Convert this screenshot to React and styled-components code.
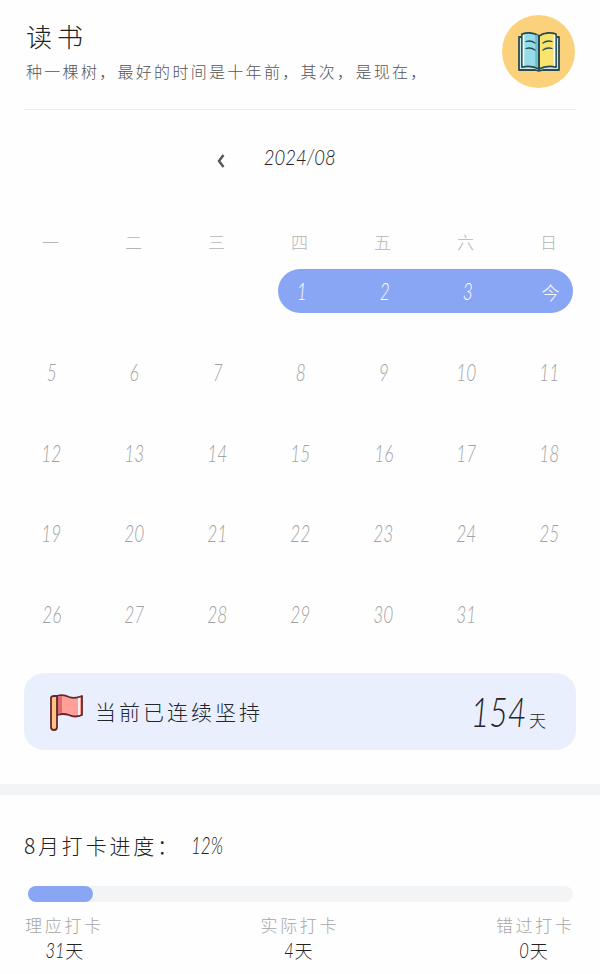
import React from 'react';
import styled, { createGlobalStyle } from 'styled-components';

const GlobalStyle = createGlobalStyle`
  * { box-sizing: border-box; }
  body {
    margin: 0;
    background: #fefefe;
    color: #222;
    font-family: 'Noto Sans CJK SC', sans-serif;
    font-weight: 300;
  }
`;

const Page = styled.main`
  width: 600px;
  height: 974px;
  overflow: hidden;
  display: flex;
  flex-direction: column;
`;

const Header = styled.header`
  height: 110px;
  margin: 0 24px;
  padding-top: 15px;
  border-bottom: 1px solid #ebebeb;
  display: flex;
  justify-content: space-between;
  align-items: flex-start;
`;

const Title = styled.h1`
  margin: 2px 0 0 2px;
  font-size: 26px;
  font-weight: 300;
  line-height: 38px;
  letter-spacing: 5px;
`;

const Subtitle = styled.p`
  margin: 4px 0 0 2px;
  font-size: 16px;
  line-height: 24px;
  letter-spacing: 2.3px;
  white-space: nowrap;
  color: #555;
`;

const Badge = styled.div`
  width: 73px;
  height: 73px;
  margin-right: 1px;
  border-radius: 50%;
  background: #fbd27b;
  display: flex;
  align-items: center;
  justify-content: center;
`;

const Digits = styled.span`
  display: inline-block;
  font-family: Lato, 'Noto Sans CJK SC', sans-serif;
  font-style: italic;
  font-weight: 300;
  font-size: ${(p) => p.$size || 23}px;
  line-height: 1;
  letter-spacing: 0;
  transform: scaleX(${(p) => p.$squeeze || 0.75});
  transform-origin: ${(p) => p.$origin || 'center'};
`;

const MonthBar = styled.div`
  height: 93px;
  display: grid;
  grid-template-columns: 240px 120px 240px;
  align-items: center;
  justify-items: center;
`;

const PrevButton = styled.button`
  width: 20px;
  height: 24px;
  margin: 8px 9px 0 0;
  padding: 0;
  border: 0;
  background: none;
  justify-self: end;
  display: flex;
  align-items: center;
  justify-content: center;
`;

const Week = styled.div`
  height: ${(p) => p.$height}px;
  padding-left: ${(p) => p.$inset}px;
  display: grid;
  grid-template-columns: repeat(7, 83px);
  grid-template-rows: 100%;
  align-items: center;
  justify-items: center;
`;

const WeekdayRow = styled(Week)`
  margin-top: 16px;
`;

const Weeks = styled.div`
  margin-top: 16px;
`;

const Weekday = styled.span`
  grid-row: 1;
  font-size: 17px;
  line-height: 24px;
  color: #b5b5b5;
`;

const Day = styled.span`
  grid-row: 1;
  grid-column: ${(p) => p.$col};
  z-index: 1;
  padding-top: ${(p) => (p.$active ? 2 : 0)}px;
  font-size: 18px;
  line-height: 24px;
  color: ${(p) => (p.$active ? '#fff' : '#a3a3a3')};
`;

const Streak = styled.div`
  grid-row: 1;
  grid-column: 4 / 8;
  justify-self: start;
  width: 295px;
  height: 44px;
  margin-left: 18px;
  border-radius: 22px;
  background: #88a6f3;
`;

const StreakCard = styled.section`
  height: 77px;
  flex: none;
  margin: 18px 24px 0;
  padding: 0 30px 0 23px;
  border-radius: 20px;
  background: #e9effc;
  display: flex;
  align-items: center;
`;

const StreakLabel = styled.span`
  flex: 1;
  margin: -2px 0 0 11px;
  font-size: 21px;
  letter-spacing: 3px;
  color: #25262b;
`;

const StreakCount = styled.div`
  display: flex;
  align-items: baseline;
  gap: 3px;
  font-size: 17px;
  color: #25262b;
`;

const Divider = styled.div`
  height: 11px;
  flex: none;
  margin-top: 34px;
  background: #f3f4f6;
`;

const Progress = styled.section`
  padding: 34px 27px 0 28px;
`;

const ProgressTitle = styled.h2`
  height: 32px;
  margin: 0 0 0 -4px;
  display: flex;
  align-items: center;
  font-size: 21px;
  font-weight: 300;
  letter-spacing: 2.8px;
`;

const Percent = styled.span`
  margin-left: 10px;
  letter-spacing: 0;
`;

const Track = styled.div`
  height: 16px;
  margin-top: 25px;
  border-radius: 8px;
  background: #f3f4f6;
`;

const Fill = styled.div`
  width: ${(p) => p.$percent}%;
  height: 100%;
  border-radius: 8px;
  background: #88a6f3;
`;

const Stats = styled.div`
  margin: 10px 1px 0 -3px;
  display: flex;
  justify-content: space-between;
`;

const Stat = styled.div`
  display: flex;
  flex-direction: column;
  align-items: center;
`;

const StatLabel = styled.span`
  font-size: 17px;
  line-height: 26px;
  letter-spacing: 2.7px;
  margin-right: -2.7px;
  color: #a6a6a6;
`;

const StatValue = styled.span`
  display: flex;
  align-items: center;
  gap: 1px;
  margin-right: 4px;
  font-size: 18px;
  line-height: 24px;
`;

const BookIcon = () => (
  <svg width="42" height="40" viewBox="0 0 42 40" fill="none" stroke="#294b50" strokeWidth="1.8" strokeLinejoin="round" strokeLinecap="round">
    <path d="M4 5H1V38H17Q21 39.5 25 38H41V5H38Z" fill="#cfe9e5" />
    <path d="M4 2Q14-1 21 4V37Q14 33 4 35Z" fill="#95dce8" />
    <path d="M21 4Q28-1 38 2V35Q28 33 21 37Z" fill="#fae36f" />
    <path d="M5.5 3.5V33.5M36.5 3.5V33.5" stroke="#f4ffff" strokeWidth="1.6" />
    <path d="M18.5 4V34" stroke="#6cbccb" strokeWidth="2.5" />
    <path d="M21 4V37" strokeWidth="2" />
    <path d="M8 9.5Q13 8 17 11M8 16.5Q13 15 17 18M25 11Q29 8 34 9.5M25 18Q29 15 34 16.5" strokeWidth="1.3" />
  </svg>
);

const FlagIcon = () => (
  <svg width="37" height="38" viewBox="0 0 37 38" stroke="#63272f" strokeWidth="1.8" strokeLinejoin="round">
    <path d="M10 3Q16 1 22 4Q28 6 35 3V22Q28 25 22 22Q16 20 10 22Z" fill="#ff9f98" />
    <path d="M11 3.5L15 3V20L11 21Z" fill="#df6d70" stroke="none" />
    <path d="M31 5L33 4.7V22L31 22Z" fill="#fff0ef" stroke="none" />
    <path d="M4 5Q4 3 7 3H10V34Q10 37 7 37Q4 37 4 34Z" fill="#ffc580" />
  </svg>
);

const weekdays = ['一', '二', '三', '四', '五', '六', '日'];
const weeks = [5, 12, 19, 26];
const stats = [
  ['理应打卡', 31],
  ['实际打卡', 4],
  ['错过打卡', 0],
];

export default function App() {
  return (
    <>
      <GlobalStyle />
      <Page>
        <Header>
          <div>
            <Title>读书</Title>
            <Subtitle>种一棵树，最好的时间是十年前，其次，是现在，</Subtitle>
          </div>
          <Badge><BookIcon /></Badge>
        </Header>
        <MonthBar>
          <PrevButton aria-label="上个月">
            <svg width="8" height="14" viewBox="0 0 8 14" fill="none" stroke="#555" strokeWidth="2.4">
              <path d="M6.5 1L2 7L6.5 13" />
            </svg>
          </PrevButton>
          <Digits $size={22} $squeeze={0.84}>2024/08</Digits>
        </MonthBar>
        <WeekdayRow $height={46} $inset={9}>
          {weekdays.map((d) => <Weekday key={d}>{d}</Weekday>)}
        </WeekdayRow>
        <Week $height={52} $inset={11}>
          <Streak />
          {[1, 2, 3].map((d) => (
            <Day key={d} $col={d + 3} $active><Digits>{d}</Digits></Day>
          ))}
          <Day $col={7} $active>今</Day>
        </Week>
        <Weeks>
          {weeks.map((start) => (
            <Week key={start} $height={80.5} $inset={10}>
              {weekdays.map((d, i) => start + i <= 31 && (
                <Day key={d} $col={i + 1}><Digits>{start + i}</Digits></Day>
              ))}
            </Week>
          ))}
        </Weeks>
        <StreakCard>
          <FlagIcon />
          <StreakLabel>当前已连续坚持</StreakLabel>
          <StreakCount>
            <Digits $size={41} $squeeze={0.78} $origin="right">154</Digits>天
          </StreakCount>
        </StreakCard>
        <Divider />
        <Progress>
          <ProgressTitle>
            8月打卡进度：
            <Percent><Digits $squeeze={0.74} $origin="left">12%</Digits></Percent>
          </ProgressTitle>
          <Track><Fill $percent={12} /></Track>
          <Stats>
            {stats.map(([label, value]) => (
              <Stat key={label}>
                <StatLabel>{label}</StatLabel>
                <StatValue><Digits $size={22} $origin="right">{value}</Digits>天</StatValue>
              </Stat>
            ))}
          </Stats>
        </Progress>
      </Page>
    </>
  );
}
